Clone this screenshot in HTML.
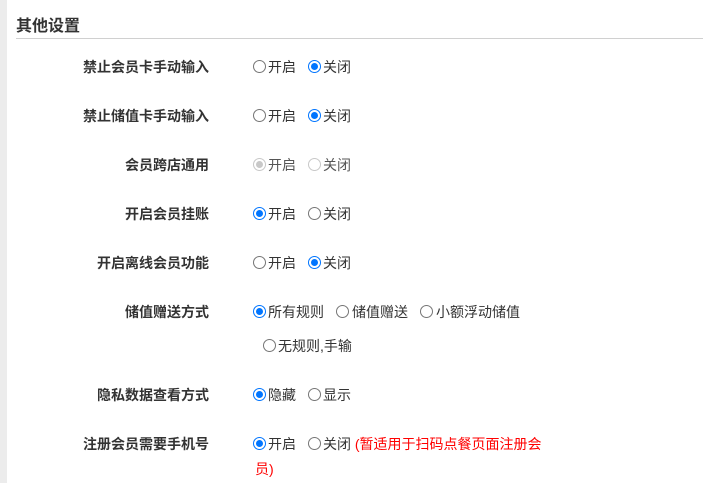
<!DOCTYPE html>
<html><head><meta charset="utf-8"><style>
body{margin:0;width:703px;height:483px;background:#fff;position:relative;overflow:hidden;font-family:"Liberation Sans","Noto Sans CJK SC",sans-serif;color:#333;font-size:14px}
.bar{position:absolute;left:0;top:0;width:7px;height:483px;background:#ececec}
.title{position:absolute;left:16px;top:12px;font-size:16px;font-weight:bold;color:#333}
.line{position:absolute;left:16px;right:0;top:38px;height:1px;background:#d0d0d0}
.lab{position:absolute;right:494px;font-weight:bold;white-space:nowrap;line-height:18px}
.t{position:absolute;white-space:nowrap;line-height:18px}
.r{position:absolute;width:11px;height:11px;border:1px solid #767676;border-radius:50%;background:#fff}
.r.on{border-color:#0075ff}
.r.on::after{content:"";position:absolute;left:2px;top:2px;width:7px;height:7px;border-radius:50%;background:#0075ff}
.r.dis{border-color:#c8c8c8}
.r.dis.on::after{background:#c8c8c8}
.dt{color:#555}
</style></head><body>
<div class="bar"></div>
<div class="title">其他设置</div>
<div class="line"></div>

<div class="lab" style="top:58px">禁止会员卡手动输入</div>
<span class="r" style="left:253px;top:60px"></span><span class="t" style="left:268px;top:58px">开启</span>
<span class="r on" style="left:308px;top:60px"></span><span class="t" style="left:323px;top:58px">关闭</span>

<div class="lab" style="top:107px">禁止储值卡手动输入</div>
<span class="r" style="left:253px;top:109px"></span><span class="t" style="left:268px;top:107px">开启</span>
<span class="r on" style="left:308px;top:109px"></span><span class="t" style="left:323px;top:107px">关闭</span>

<div class="lab" style="top:156px">会员跨店通用</div>
<span class="r dis on" style="left:253px;top:158px"></span><span class="t dt" style="left:268px;top:156px">开启</span>
<span class="r dis" style="left:308px;top:158px"></span><span class="t dt" style="left:323px;top:156px">关闭</span>

<div class="lab" style="top:205px">开启会员挂账</div>
<span class="r on" style="left:253px;top:207px"></span><span class="t" style="left:268px;top:205px">开启</span>
<span class="r" style="left:308px;top:207px"></span><span class="t" style="left:323px;top:205px">关闭</span>

<div class="lab" style="top:254px">开启离线会员功能</div>
<span class="r" style="left:253px;top:256px"></span><span class="t" style="left:268px;top:254px">开启</span>
<span class="r on" style="left:308px;top:256px"></span><span class="t" style="left:323px;top:254px">关闭</span>

<div class="lab" style="top:303px">储值赠送方式</div>
<span class="r on" style="left:253px;top:305px"></span><span class="t" style="left:268px;top:303px">所有规则</span>
<span class="r" style="left:336px;top:305px"></span><span class="t" style="left:352px;top:303px">储值赠送</span>
<span class="r" style="left:420px;top:305px"></span><span class="t" style="left:436px;top:303px">小额浮动储值</span>
<span class="r" style="left:263px;top:339px"></span><span class="t" style="left:278px;top:337px">无规则,手输</span>

<div class="lab" style="top:386px">隐私数据查看方式</div>
<span class="r on" style="left:253px;top:388px"></span><span class="t" style="left:268px;top:386px">隐藏</span>
<span class="r" style="left:308px;top:388px"></span><span class="t" style="left:323px;top:386px">显示</span>

<div class="lab" style="top:435px">注册会员需要手机号</div>
<span class="r on" style="left:253px;top:437px"></span><span class="t" style="left:268px;top:435px">开启</span>
<span class="r" style="left:308px;top:437px"></span><span class="t" style="left:323px;top:435px">关闭 <span style="color:#f00">(暂适用于扫码点餐页面注册会</span></span>
<span class="t" style="left:255px;top:460px;color:#f00">员)</span>
</body></html>
